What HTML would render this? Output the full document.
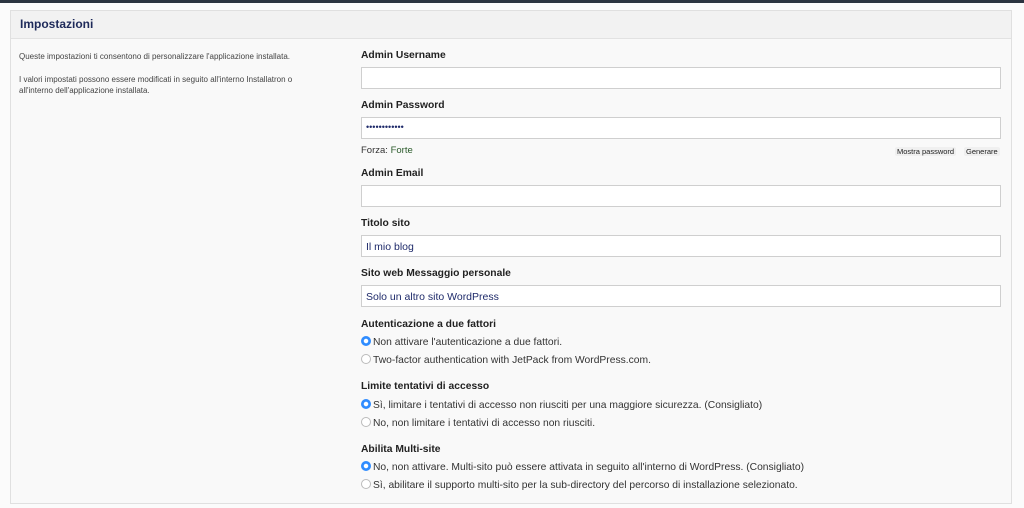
<!DOCTYPE html>
<html><head><style>
*{box-sizing:border-box;margin:0;padding:0}
body{width:1024px;height:508px;background:#fbfbfb;font-family:"Liberation Sans",sans-serif;position:relative;overflow:hidden;color:#222}
.top{position:absolute;left:0;top:0;width:1024px;height:3px;background:#2b3440}
.panel{position:absolute;left:10px;top:10px;width:1002px;height:494px;background:#f9f9f9;border:1px solid #e0e0e0}
.hdr{position:absolute;left:0;top:0;width:100%;height:28px;background:#f2f2f2;border-bottom:1px solid #e2e2e2}
.hdr span{position:absolute;left:9px;top:6px;font-size:12px;font-weight:bold;color:#1e2a5a}
.desc{position:absolute;left:8px;font-size:8px;color:#444;line-height:11px}
.lbl{position:absolute;left:350px;font-size:10.3px;font-weight:bold;color:#222}
.inp{position:absolute;left:350px;width:640px;height:22px;background:#fff;border:1px solid #cfcfcf;font-size:10.5px;color:#1e2a6a;padding:5px 4px}
.txt{position:absolute;font-size:9.5px;color:#333}
.rad{position:absolute;left:350px;font-size:10.3px;color:#333;white-space:nowrap}
.rad i{display:inline-block;width:10px;height:10px;border-radius:50%;border:1px solid #bbb;background:#fff;vertical-align:-1px;margin-right:2px}
.rad i.on{border:none;background:radial-gradient(circle,#fff 0 2px,#2f8cff 2.5px)}
.btn{position:absolute;font-size:7.5px;color:#222;background:#f0f0f0;border-radius:2px;padding:0 2px}
</style></head><body>
<div class="top"></div>
<div class="panel">
<div class="hdr"><span>Impostazioni</span></div>
<div class="desc" style="top:40px">Queste impostazioni ti consentono di personalizzare l'applicazione installata.</div>
<div class="desc" style="top:63px">I valori impostati possono essere modificati in seguito all'interno Installatron o<br>all'interno dell'applicazione installata.</div>
<div class="lbl" style="top:39px">Admin Username</div>
<div class="inp" style="top:56px"></div>
<div class="lbl" style="top:89px">Admin Password</div>
<div class="inp" style="top:106px;font-size:9px;padding-top:4px">••••••••••••</div>
<div class="txt" style="left:350px;top:134px">Forza: <span style="color:#2a5a2a">Forte</span></div>
<div class="btn" style="left:884px;top:136px">Mostra password</div>
<div class="btn" style="left:953px;top:136px">Generare</div>
<div class="lbl" style="top:157px">Admin Email</div>
<div class="inp" style="top:174px"></div>
<div class="lbl" style="top:207px">Titolo sito</div>
<div class="inp" style="top:224px">Il mio blog</div>
<div class="lbl" style="top:257px">Sito web Messaggio personale</div>
<div class="inp" style="top:274px">Solo un altro sito WordPress</div>
<div class="lbl" style="top:308px">Autenticazione a due fattori</div>
<div class="rad" style="top:325px"><i class="on"></i>Non attivare l'autenticazione a due fattori.</div>
<div class="rad" style="top:343px"><i></i>Two-factor authentication with JetPack from WordPress.com.</div>
<div class="lbl" style="top:370px">Limite tentativi di accesso</div>
<div class="rad" style="top:388px"><i class="on"></i>Sì, limitare i tentativi di accesso non riusciti per una maggiore sicurezza. (Consigliato)</div>
<div class="rad" style="top:406px"><i></i>No, non limitare i tentativi di accesso non riusciti.</div>
<div class="lbl" style="top:433px">Abilita Multi-site</div>
<div class="rad" style="top:450px"><i class="on"></i>No, non attivare. Multi-sito può essere attivata in seguito all'interno di WordPress. (Consigliato)</div>
<div class="rad" style="top:468px"><i></i>Sì, abilitare il supporto multi-sito per la sub-directory del percorso di installazione selezionato.</div>
</div>
</body></html>
